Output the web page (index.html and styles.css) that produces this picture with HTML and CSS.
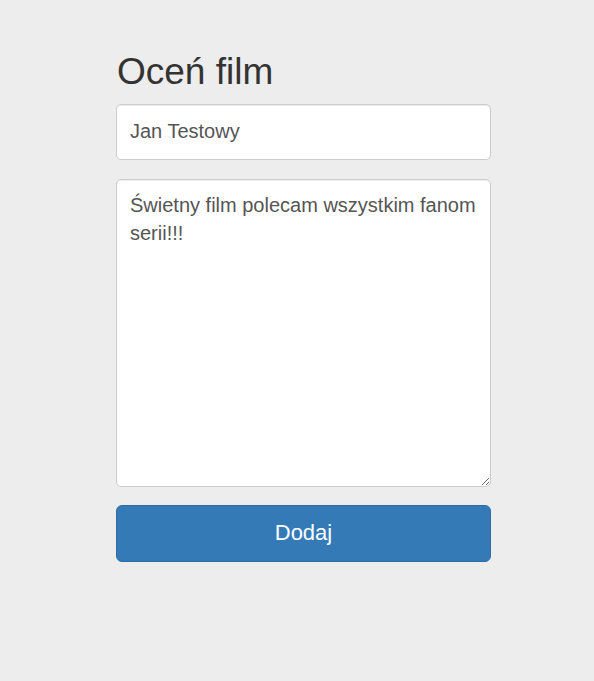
FILE: index.html
```html
<!DOCTYPE html>
<html lang="pl">
<head>
<meta charset="utf-8">
<title>Oceń film</title>
<link rel="stylesheet" href="styles.css">
</head>
<body>
<main class="page">
  <form class="review-form">
    <h1 class="title">Oceń film</h1>
    <input class="field" type="text" value="Jan Testowy">
    <textarea class="field area">Świetny film polecam wszystkim fanom serii!!!</textarea>
    <button class="btn" type="button">Dodaj</button>
  </form>
</main>
</body>
</html>
```

FILE: styles.css
```css
html, body {
  margin: 0;
  padding: 0;
  background: #ededed;
  font-family: "Liberation Sans", Arial, sans-serif;
}
.page {
  padding: 52px 0 0 116px;
}
.review-form {
  width: 375px;
  display: flex;
  flex-direction: column;
}
.title {
  margin: 0 0 11px 1px;
  font-size: 37px;
  font-weight: 500;
  line-height: 1.1;
  color: #333;
}
.field {
  box-sizing: border-box;
  width: 100%;
  height: 56px;
  margin: 0 0 19px 0;
  padding: 0 13px;
  border: 1px solid #ccc;
  border-radius: 5px;
  background: #fff;
  color: #555;
  font-family: "Liberation Sans", Arial, sans-serif;
  font-size: 20px;
  line-height: 1.42857;
  box-shadow: inset 0 1px 1px rgba(0,0,0,0.075);
}
.area {
  height: 308px;
  padding: 11px 13px 10px;
  margin-bottom: 18px;
  resize: vertical;
}
.btn {
  box-sizing: border-box;
  width: 100%;
  height: 57px;
  border: 1px solid #2e6da4;
  border-radius: 6px;
  background: #337ab7;
  color: #fff;
  font-family: "Liberation Sans", Arial, sans-serif;
  font-size: 22px;
  cursor: pointer;
}
```
